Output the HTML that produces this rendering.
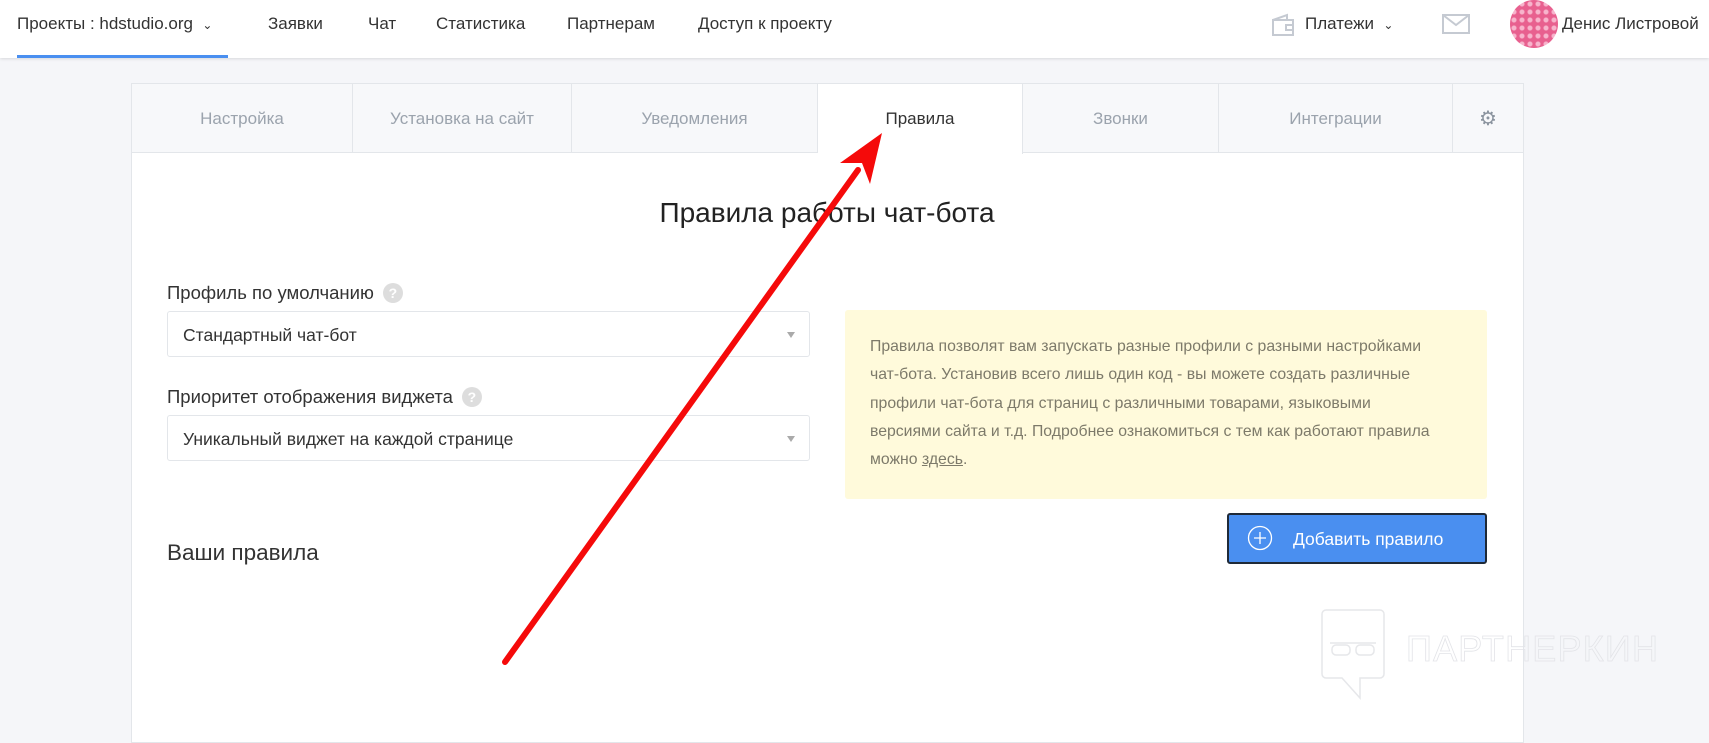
<!DOCTYPE html>
<html><head><meta charset="utf-8"><style>
*{box-sizing:border-box;margin:0;padding:0}
body{width:1709px;height:732px;overflow:hidden;background:#f5f6f9;font-family:"Liberation Sans",sans-serif;position:relative;color:#333}
.a{position:absolute;white-space:nowrap}
.nav{position:absolute;left:0;top:0;width:1709px;height:58px;background:#fff;box-shadow:0 1px 3px rgba(0,0,0,.12)}
.nav .a{top:14px;font-size:17px;color:#333}
.card{position:absolute;left:131px;top:83px;width:1393px;height:660px;background:#fff;border:1px solid #e3e6ea}
.tabs{position:absolute;left:0;top:0;width:1391px;height:69px;background:#f7f8fa;border-bottom:1px solid #e3e6ea}
.tab{position:absolute;top:0;height:69px;border-right:1px solid #e3e6ea;color:#9ba3ad;font-size:17px;display:flex;align-items:center;justify-content:center}
.sel{position:absolute;left:167px;width:643px;height:46px;border:1px solid #e3e6ea;border-radius:3px;background:#fff;font-size:17.5px;padding:13px 0 0 15px}
.sel:after{content:"";position:absolute;right:14px;top:20px;border:4px solid transparent;border-top:6px solid #aaa}
.q{display:inline-block;width:20px;height:20px;border-radius:50%;background:#ddd;color:#fff;font-size:14px;font-weight:bold;text-align:center;line-height:20px;margin-left:9px;vertical-align:1px}
</style></head><body>
<div class="nav">
<div class="a" style="left:17px">Проекты : hdstudio.org &nbsp;<span style="font-size:12px">⌄</span></div>
<div style="position:absolute;left:17px;top:55px;width:211px;height:3px;background:#4a8ff0"></div>
<div class="a" style="left:268px">Заявки</div>
<div class="a" style="left:368px">Чат</div>
<div class="a" style="left:436px">Статистика</div>
<div class="a" style="left:567px">Партнерам</div>
<div class="a" style="left:698px">Доступ к проекту</div>
<svg class="a" style="left:1271px;top:13px" width="24" height="24" viewBox="0 0 24 24" fill="none" stroke="#c5cad2" stroke-width="2"><path d="M2 7h20v15H2zM2 7l14-5v5M15 12h7v5h-7z"/></svg>
<div class="a" style="left:1305px">Платежи &nbsp;<span style="font-size:12px">⌄</span></div>
<svg class="a" style="left:1442px;top:14px" width="28" height="20" viewBox="0 0 28 20" fill="none" stroke="#c5cad2" stroke-width="2"><rect x="1" y="1" width="26" height="18"/><path d="M1 1l13 10L27 1"/></svg>
<div class="a" style="left:1510px;top:0;width:48px;height:48px;border-radius:50%;background:radial-gradient(circle,#f7b4cc 2px,#e8608f 3px) 0 0/8px 8px"></div>
<div class="a" style="left:1562px">Денис Листровой</div>
</div>
<div class="card">
<div class="tabs">
<div class="tab" style="left:0;width:221px">Настройка</div>
<div class="tab" style="left:221px;width:219px">Установка на сайт</div>
<div class="tab" style="left:440px;width:246px">Уведомления</div>
<div class="tab" style="left:686px;width:205px;background:#fff;color:#333;height:70px">Правила</div>
<div class="tab" style="left:891px;width:196px">Звонки</div>
<div class="tab" style="left:1087px;width:234px">Интеграции</div>
<div class="tab" style="left:1321px;width:70px;border-right:0;font-size:20px;color:#8a939e">⚙</div>
</div>
</div>
<div class="a" style="left:0;width:1654px;text-align:center;top:197px;font-size:28px;color:#222">Правила работы чат-бота</div>
<div class="a" style="left:167px;top:282px;font-size:18.5px">Профиль по умолчанию<span class="q">?</span></div>
<div class="sel" style="top:311px">Стандартный чат-бот</div>
<div class="a" style="left:167px;top:386px;font-size:18.5px">Приоритет отображения виджета<span class="q">?</span></div>
<div class="sel" style="top:415px">Уникальный виджет на каждой странице</div>
<div class="a" style="left:845px;top:310px;width:642px;height:189px;background:#fffadb;border-radius:3px;padding:23px 25px;font-size:15.8px;line-height:28.3px;color:#7d7a6a">Правила позволят вам запускать разные профили с разными настройками<br>чат-бота. Установив всего лишь один код - вы можете создать различные<br>профили чат-бота для страниц с различными товарами, языковыми<br>версиями сайта и т.д. Подробнее ознакомиться с тем как работают правила<br>можно <u>здесь</u>.</div>
<div class="a" style="left:1227px;top:513px;width:260px;height:51px;background:#4a8ff0;border:2px solid #1f2a38;border-radius:3px;color:#fff;font-size:17.5px;padding:14px 0 0 64px">Добавить правило</div>
<svg class="a" style="left:1247px;top:525px" width="26" height="26" viewBox="0 0 26 26" fill="none" stroke="#fff" stroke-width="1.3"><circle cx="13" cy="13" r="11.5"/><path d="M13 7v12M7 13h12"/></svg>
<div class="a" style="left:167px;top:540px;font-size:22.5px;color:#333">Ваши правила</div>
<svg class="a" style="left:1320px;top:605px" width="350" height="95" viewBox="0 0 350 95" fill="none" stroke="#e6e7ea" stroke-width="1.5"><path d="M6 5h54a4 4 0 0 1 4 4v60a4 4 0 0 1-4 4H40v20L22 73H6a4 4 0 0 1-4-4V9a4 4 0 0 1 4-4z"/><rect x="12" y="40" width="18" height="10" rx="4"/><rect x="36" y="40" width="18" height="10" rx="4"/><path d="M10 38h46"/><text x="86" y="56" font-family="Liberation Sans" font-size="36" stroke="#e3e4e8" stroke-width="0.8" fill="none" textLength="252">ПАРТНЕРКИН</text></svg>
<svg class="a" style="left:0;top:0" width="1709" height="732"><line x1="505" y1="662" x2="858" y2="170" stroke="#f50a0a" stroke-width="6" stroke-linecap="round"/><polygon points="882,133 840,163 862,163 870,184" fill="#f50a0a"/></svg>
</body></html>
